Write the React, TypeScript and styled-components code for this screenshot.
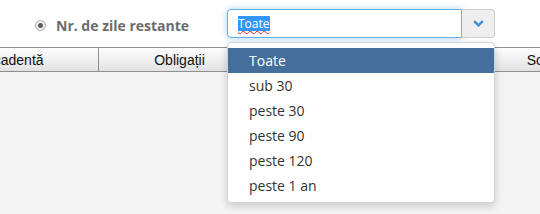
import styled, { createGlobalStyle } from 'styled-components';

const GlobalStyle = createGlobalStyle`
  html, body {
    margin: 0;
    padding: 0;
    background: #ffffff;
  }
  body {
    font-family: "Open Sans", "Liberation Sans", sans-serif;
    overflow: hidden;
  }
`;

const Page = styled.div`
  width: 540px;
  height: 214px;
  display: flex;
  flex-direction: column;
  overflow: hidden;
`;

const FilterRow = styled.div`
  height: 47px;
  display: flex;
  align-items: center;
  padding-left: 35px;
  box-sizing: border-box;
`;

const Radio = styled.span`
  width: 11px;
  height: 11px;
  border-radius: 50%;
  border: 1px solid #a8a8a8;
  background: #efefef;
  box-sizing: border-box;
  display: flex;
  align-items: center;
  justify-content: center;
  margin-top: 3px;

  &::after {
    content: '';
    width: 5px;
    height: 5px;
    border-radius: 50%;
    background: #5e5e5e;
  }
`;

const Label = styled.span`
  margin-left: 10px;
  width: 171px;
  font-size: 14px;
  font-weight: 700;
  color: #6b6b6b;
  padding-top: 4px;
`;

const SelectGroup = styled.div`
  position: relative;
  width: 268px;
  height: 29px;
  display: flex;
`;

const Input = styled.div`
  flex: 1;
  display: flex;
  align-items: center;
  padding-left: 10px;
  border: 1px solid #66afe9;
  border-radius: 4px 0 0 4px;
  background: #fff;
  box-shadow: 0 0 7px rgba(102, 175, 233, 0.55);
  font-size: 12px;
  color: #333;
`;

const Selected = styled.span`
  background: #3297fd;
  color: #fff;
  line-height: 15px;
  text-decoration: underline wavy #e02020;
  text-decoration-thickness: 1px;
  text-underline-offset: 2px;
`;

const Toggle = styled.div`
  width: 33px;
  display: flex;
  align-items: center;
  justify-content: center;
  background: #eeeeee;
  border: 1px solid #cccccc;
  border-left: none;
  border-radius: 0 4px 4px 0;
  box-sizing: border-box;
`;

const Menu = styled.ul`
  position: absolute;
  top: 33px;
  left: 0;
  width: 268px;
  margin: 0;
  padding: 5px 0 4px;
  list-style: none;
  background: #fff;
  border: 1px solid #d4d4d4;
  border-radius: 4px;
  box-sizing: border-box;
  box-shadow: 0 3px 8px rgba(0, 0, 0, 0.18);
  z-index: 10;
`;

const Option = styled.li<{ $active?: boolean }>`
  height: 25px;
  display: flex;
  align-items: center;
  padding-left: 21px;
  font-size: 14px;
  color: ${({ $active }) => ($active ? '#ffffff' : '#333333')};
  background: ${({ $active }) => ($active ? '#446f9c' : 'transparent')};
`;

const Grid = styled.div`
  flex: 1;
  background: #f4f4f4;
  overflow: hidden;
`;

const HeaderRow = styled.div`
  display: grid;
  grid-template-columns: 169px 162px 200px 206px;
  margin-left: -70px;
  height: 25px;
  box-sizing: border-box;
  border-top: 1px solid #8f8f8f;
  border-bottom: 1px solid #8f8f8f;
  background: linear-gradient(#fdfdfd, #e2e2e2);
`;

const HeaderCell = styled.div`
  display: flex;
  align-items: center;
  justify-content: center;
  border-right: 1px solid #8f8f8f;
  font-family: "Liberation Sans", Arial, sans-serif;
  font-size: 14px;
  color: #111;
  white-space: nowrap;
  padding-top: 1px;

  &:last-child {
    border-right: none;
  }
`;

const options = ['Toate', 'sub 30', 'peste 30', 'peste 90', 'peste 120', 'peste 1 an'];

export default function App() {
  return (
    <Page>
      <GlobalStyle />
      <FilterRow>
        <Radio />
        <Label>Nr. de zile restante</Label>
        <SelectGroup>
          <Input>
            <Selected>Toate</Selected>
          </Input>
          <Toggle>
            <svg width="11" height="7" viewBox="0 0 11 7">
              <path d="M1.2 1.2 L5.5 5.3 L9.8 1.2" fill="none" stroke="#3b8de0" strokeWidth="2.4" />
            </svg>
          </Toggle>
          <Menu>
            {options.map((o, i) => (
              <Option key={o} $active={i === 0}>
                {o}
              </Option>
            ))}
          </Menu>
        </SelectGroup>
      </FilterRow>
      <Grid>
        <HeaderRow>
          <HeaderCell>Scadentă</HeaderCell>
          <HeaderCell>Obligații</HeaderCell>
          <HeaderCell>Debit</HeaderCell>
          <HeaderCell>Sold restant</HeaderCell>
        </HeaderRow>
      </Grid>
    </Page>
  );
}
